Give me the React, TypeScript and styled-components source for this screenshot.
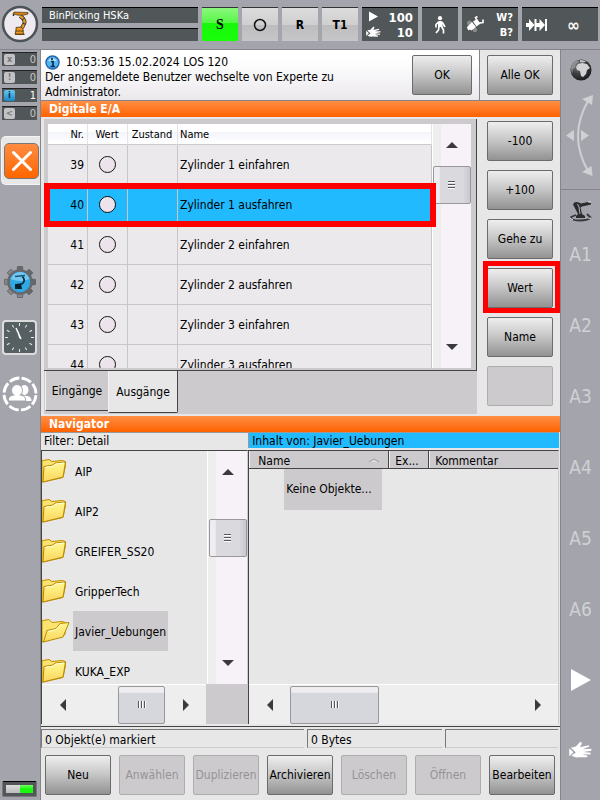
import React from "react";
import styled, { createGlobalStyle, css } from "styled-components";

const GlobalStyle = createGlobalStyle`
  *, *::before, *::after { box-sizing: border-box; }
  body { margin: 0; background: #a4a4ad; }
  body, button { font-family: "DejaVu Sans Condensed", "DejaVu Sans", sans-serif; font-size: 12px; color: #000; }
  button { margin: 0; padding: 0; border: 0; background: none; cursor: pointer; }
  svg { display: block; flex: none; }
  ul { list-style: none; margin: 0; padding: 0; }
`;

const line = "#84848a";
const panel = "#e7e7e7";
const inset = "#cdcacd";
const slate = "#515758";
const blue = "#21baff";

const Shell = styled.div`
  display: flex;
  flex-direction: column;
  min-height: 100vh;
`;

/* ---------- status bar ---------- */
const StatusBar = styled.header`
  display: flex;
  gap: 4px;
  height: 50px;
  padding: 7px 2px 8px;
  border-bottom: 1px solid ${line};
`;
const MenuButton = styled.button`
  width: 36px;
  display: flex;
  align-items: center;
  justify-content: center;
`;
const Names = styled.div`
  flex: 1;
  display: grid;
  grid-template-rows: 1fr 1fr;
  gap: 5px;
`;
const NameLine = styled.div`
  background: ${slate};
  border-top: 1px solid #000;
  color: #fff;
  font-size: 11px;
  line-height: 15px;
  padding-left: 7px;
`;
const LightKey = styled.button<{ $on?: boolean }>`
  width: 36px;
  border-top: 1px solid #333;
  display: flex;
  align-items: center;
  justify-content: center;
  font-weight: bold;
  background: ${(p) =>
    p.$on
      ? "linear-gradient(#8cf77e 0%, #55f745 45%, #18f70c 46%, #18ff08 100%)"
      : "linear-gradient(#dcdcdc 0%, #cfcfcf 50%, #bdbdbf 51%, #c6c6c8 100%)"};
`;
const SubmitKey = styled(LightKey)`
  font-family: "Liberation Serif", serif;
  font-size: 14px;
`;
const DarkKey = styled.button<{ $w: number }>`
  width: ${(p) => p.$w}px;
  background: ${slate};
  border-top: 1px solid #000;
  color: #fff;
  font-weight: bold;
  display: flex;
  align-items: center;
  justify-content: ${(p) => (p.$w > 40 ? "space-between" : "center")};
  padding: ${(p) => (p.$w > 40 ? "0 5px 0 4px" : 0)};
`;
const Endless = styled.span`
  font-size: 17px;
  padding-right: 13px;
`;
const KeyLines = styled.span<{ $small?: boolean }>`
  display: flex;
  flex-direction: column;
  text-align: right;
  line-height: 15px;
  font-size: ${(p) => (p.$small ? 11 : 13)}px;
`;

/* ---------- frame ---------- */
const Body = styled.div`
  flex: 1;
  display: grid;
  grid-template-columns: 40px minmax(0, 1fr) 40px;
`;
const Side = styled.aside`
  display: flex;
  flex-direction: column;
  align-items: center;
`;
const LeftSide = styled(Side)`
  padding: 2px 3px 3px 2px;
`;
const RightSide = styled(Side)`
  border-left: 1px solid ${line};
`;
const Main = styled.main`
  display: flex;
  flex-direction: column;
  background: ${panel};
  border-left: 1px solid ${line};
`;

/* ---------- left side ---------- */
const Counters = styled.div`
  width: 100%;
  display: flex;
  flex-direction: column;
  gap: 4px;
`;
const Counter = styled.div<{ $on?: boolean }>`
  height: 14px;
  background: ${slate};
  border-top: 1px solid #222;
  display: flex;
  align-items: center;
  justify-content: space-between;
  padding: 0 1px 0 2px;
  font-size: 11px;
  color: ${(p) => (p.$on ? "#fff" : "#c6c6ca")};
`;
const CounterIcon = styled.span<{ $on?: boolean }>`
  width: 11px;
  height: 11px;
  border-radius: 2px;
  display: grid;
  place-items: center;
  font-size: 9px;
  line-height: 11px;
  font-weight: bold;
  color: ${(p) => (p.$on ? "#06304a" : "#77777a")};
  background: ${(p) => (p.$on ? "linear-gradient(#6cc7f2, #1787c6)" : "#c2c2c4")};
`;
const CloseTab = styled.div`
  align-self: stretch;
  height: 49px;
  margin: 16px -4px 0 -1px;
  padding: 6px 0 0 2px;
  background: ${panel};
  border: 1px solid #f4f4f4;
  border-right: 0;
  border-radius: 5px 0 0 5px;
`;
const CloseButton = styled.button`
  width: 35px;
  height: 36px;
  border: 1px solid #777;
  border-radius: 5px;
  background: linear-gradient(#ff8c42, #ff6600);
  display: grid;
  place-items: center;
`;
const SideTools = styled.div`
  display: flex;
  flex-direction: column;
  align-items: center;
  gap: 21px;
  margin-top: 80px;
`;
const Battery = styled.div`
  width: 100%;
  height: 16px;
  margin-top: auto;
  padding: 3px;
  background: ${slate};
  border: 1px solid #777;
  border-top-color: #000;
  border-radius: 2px;
  display: grid;
  grid-template-columns: 1fr 1fr;
`;
const Cell = styled.span<{ $full?: boolean }>`
  background: ${(p) => (p.$full ? "linear-gradient(#77fb66, #18f70c 50%)" : "linear-gradient(#dedede, #bbb)")};
`;

/* ---------- right side ---------- */
const JogTop = styled.div`
  width: 100%;
  height: 140px;
  padding: 9px 0 0;
  border-bottom: 1px solid ${line};
  display: flex;
  flex-direction: column;
  align-items: center;
  gap: 12px;
`;
const JogRobot = styled.div`
  height: 28px;
  padding-top: 11px;
`;
const AxisButton = styled.button`
  width: 100%;
  height: 71px;
  display: grid;
  place-items: center;
  font-size: 19px;
  color: #d0d0d4;
`;

/* ---------- messages ---------- */
const Messages = styled.section`
  display: grid;
  grid-template-columns: minmax(0, 1fr) 80px;
  height: 51px;
  border-bottom: 1px solid ${line};
`;
const MessageArea = styled.div`
  display: flex;
  justify-content: space-between;
  padding: 5px 7px 0 4px;
  background: linear-gradient(#fff 20%, #ebe8ec);
  border-right: 1px solid ${line};
`;
const MessageText = styled.div`
  width: 310px;
  line-height: 15px;
`;
const MessageHead = styled.div`
  display: flex;
  align-items: center;
  gap: 6px;
  height: 15px;
`;
const AllArea = styled.div`
  padding: 5px 0 0 7px;
`;
const Key = styled.button<{ $w?: number }>`
  flex: none;
  width: ${(p) => p.$w ?? 66}px;
  height: 40px;
  border: 1px solid #6b6b6b;
  border-radius: 2px;
  background: linear-gradient(#eeeeef 0%, #c9c9ca 45%, #929292 100%);
  white-space: nowrap;
  &:disabled {
    background: ${inset};
    border-color: #adadad;
    color: #949496;
  }
`;

const TitleBar = styled.h2`
  margin: 0;
  height: 16px;
  padding-left: 8px;
  background: linear-gradient(#ff8f45, #ff6200);
  color: #fff;
  font-size: 12px;
  line-height: 17px;
  font-weight: bold;
`;

/* ---------- digital I/O ---------- */
const IoSection = styled.section`
  display: grid;
  grid-template-columns: minmax(0, 1fr) 66px;
  gap: 10px;
  padding: 2px 7px 2px 3px;
  height: 299px;
`;
const IoPanel = styled.div`
  display: flex;
  flex-direction: column;
  background: ${inset};
`;
const TableFrame = styled.div`
  height: 252px;
  padding: 5px 5px 2px 4px;
  border-right: 1px solid #444;
  border-bottom: 1px solid #444;
  display: grid;
  grid-template-columns: minmax(0, 1fr) 39px;
`;
const TableView = styled.div`
  position: relative;
  z-index: 1;
  height: 244px;
  clip-path: inset(0 -10px 0 -10px);
  background: #ebe9ec;
`;
const IoTable = styled.table`
  width: 100%;
  border-collapse: separate;
  border-spacing: 0;
  table-layout: fixed;
`;
const Th = styled.th<{ $align?: string }>`
  height: 21px;
  padding: 0 3px 0 2px;
  font-weight: normal;
  font-size: 11px;
  text-align: ${(p) => p.$align ?? "left"};
  background: linear-gradient(#fff 40%, #f4f5fb 41%, #fff);
  border-bottom: 1px solid ${inset};
  border-right: 1px solid #e6e4e8;
`;
const IoRow = styled.tr<{ $selected?: boolean }>`
  background: ${(p) => (p.$selected ? blue : "transparent")};
`;
const Td = styled.td<{ $right?: boolean }>`
  height: 40px;
  padding: 0 3px 0 2px;
  text-align: ${(p) => (p.$right ? "right" : "left")};
  border-bottom: 1px solid #c8c6c9;
  border-right: 1px solid #c8c6c9;
  white-space: nowrap;
`;
const Lamp = styled.span`
  display: block;
  width: 17px;
  height: 17px;
  margin-left: 9px;
  border: 1px solid #111;
  border-radius: 50%;
  background: radial-gradient(circle at 60% 60%, #ece3ec 55%, #fff);
`;
const RowMark = styled.div`
  position: absolute;
  left: -4px;
  right: -4px;
  top: 59px;
  height: 44px;
  border: 6px solid #f00;
`;
const Marked = styled.div`
  position: relative;
  height: 40px;
  &::after {
    content: "";
    position: absolute;
    inset: -7px -7px -5px -4px;
    border: 5px solid #f00;
    pointer-events: none;
  }
`;
const Tabs = styled.div`
  display: flex;
  padding-left: 1px;
`;
const Tab = styled.button<{ $active?: boolean }>`
  height: ${(p) => (p.$active ? 42 : 40)}px;
  width: ${(p) => (p.$active ? 70 : 63)}px;
  border-left: 1px solid #f2f2f2;
  border-bottom: 1px solid #444;
  ${(p) =>
    p.$active &&
    css`
      background: ${panel};
      border-right: 1px solid #444;
      border-radius: 0 0 2px 2px;
    `}
`;
const Softkeys = styled.div`
  display: flex;
  flex-direction: column;
  gap: 9px;
  padding-top: 2px;
`;

/* ---------- scroll bars ---------- */
const VBar = styled.div`
  background: linear-gradient(90deg, #eee 20%, #f6f2f7 21%);
  border-left: 1px solid #fff;
  display: flex;
  flex-direction: column;
  align-items: center;
`;
const HBar = styled.div`
  height: 40px;
  background: #eee;
  border-top: 1px solid #fff;
  display: flex;
  align-items: center;
`;
const Arrow = styled.button`
  width: 41px;
  height: 42px;
  display: grid;
  place-items: center;
`;
const Thumb = styled.div<{ $w: number }>`
  width: ${(p) => p.$w}px;
  height: 38px;
  border: 1px solid #97979c;
  border-radius: 2px;
  background: linear-gradient(#efedf0 15%, #d6d6dd 16%);
  display: grid;
  place-items: center;
`;
const VThumb = styled(Thumb)`
  background: linear-gradient(90deg, #efedf0 15%, #dad9de 16%, #dad9de 80%, #c8c8d2);
`;
const Spring = styled.span<{ $grow?: number }>`
  flex: ${(p) => p.$grow ?? 1};
`;

/* ---------- navigator ---------- */
const Navigator = styled.section`
  flex: 1;
  display: flex;
  flex-direction: column;
`;
const Panes = styled.div`
  flex: 1;
  display: grid;
  grid-template-columns: 2fr 3fr;
  grid-template-rows: 18px minmax(0, 1fr);
  padding-right: 1px;
`;
const Caption = styled.div<{ $active?: boolean }>`
  height: 16px;
  padding-left: 3px;
  line-height: 16px;
  border-top: 1px solid #999;
  background: ${(p) => (p.$active ? blue : panel)};
  border-left: ${(p) => (p.$active ? 1 : 0)}px solid #999;
`;
const Pane = styled.div`
  display: flex;
  flex-direction: column;
  border-top: 1px solid #444;
  border-left: 1px solid #444;
  border-right: 1px solid ${inset};
`;
const TreeGrid = styled.div`
  flex: 1;
  display: grid;
  grid-template-columns: minmax(0, 1fr) 40px;
`;
const Tree = styled.ul`
  height: 233px;
  overflow: hidden;
`;
const Node = styled.li`
  height: 40px;
  display: flex;
  align-items: center;
  gap: 3px;
`;
const NodeName = styled.button<{ $selected?: boolean }>`
  height: 40px;
  padding: 1px 2px 0;
  white-space: nowrap;
  background: ${(p) => (p.$selected ? inset : "none")};
`;
const Corner = styled.div`
  background: ${inset};
`;
const TreeFoot = styled.div`
  display: grid;
  grid-template-columns: minmax(0, 1fr) 41px;
`;
const ListHead = styled.div`
  display: grid;
  grid-template-columns: 140px 40px 1fr;
  height: 18px;
  background: ${inset};
  border-bottom: 1px solid #444;
`;
const HeadCell = styled.div`
  display: flex;
  align-items: center;
  justify-content: space-between;
  padding: 2px 9px 0 8px;
  border-left: 1px solid #f2f2f2;
  & + & { box-shadow: -1px 0 #444; padding-left: 5px; }
`;
const ListBody = styled.div`
  flex: 1;
  padding-left: 35px;
`;
const EmptyEntry = styled.div`
  width: 98px;
  height: 41px;
  line-height: 41px;
  padding-left: 2px;
  background: ${inset};
  white-space: nowrap;
`;
const StatusRow = styled.footer`
  display: grid;
  grid-template-columns: 263px 135px 1fr;
  gap: 3px;
  margin-top: 2px;
  padding-top: 2px;
  padding-right: 2px;
  border-top: 1px solid #444;
`;
const StatusCell = styled.div`
  height: 19px;
  line-height: 20px;
  padding-left: 3px;
  border-left: 1px solid #777;
  border-top: 1px solid #777;
  border-bottom: 1px solid ${inset};
`;
const Commands = styled.div`
  display: flex;
  justify-content: space-between;
  padding: 7px 5px 5px 4px;
`;

/* ---------- drawings ---------- */
const RobotLogo = () => (
  <svg width="38" height="38" viewBox="0 0 38 38">
    <circle cx="19" cy="19" r="17" fill="#eeeaf0" stroke="#4c5355" strokeWidth="2.5" />
    <path d="M12 8.500l1-1.500 14 .5v1.500l-6 1.500-5-.500z" fill="#d9820c" stroke="#3d3424" strokeWidth=".7" />
    <path d="M19 11q5 3 4.500 7l-2.500 5" fill="none" stroke="#333" strokeWidth="3.800" />
    <path d="M19 11q5 3 4.500 7l-2.500 5" fill="none" stroke="#ee9b20" strokeWidth="2.200" strokeDasharray="4 1" />
    <path d="M15 22.500l5-.5 2 2v3l1 2H14l1-3z" fill="#ef9820" stroke="#493710" strokeWidth=".8" />
    <path d="M14 26h9M14 29.500h9.500" stroke="#624413" />
    <path d="M12.500 9v2" stroke="#333" strokeWidth="1.500" />
  </svg>
);
const Hand = ({ s = 18 }: { s?: number }) => (
  <svg width={s} height={s * 0.8} viewBox="0 0 22 18" fill="#fff">
    <path d="M0 7l4 4-4 4z" />
    <path d="M1.500 6.500l5-1 4-4.500 1.800.3-.3 2L10.500 6l8.500-1.800.7 1.300-6.700 2.500 8.500-.3.200 1.800-8.200 1.200 7.500.8-.2 1.600-8-.2 5.200 1.600-.6 1.500-8.400-.2q-3 1-7-1.500l4.500-3z" />
  </svg>
);
const Play = ({ w, h }: { w: number; h: number }) => (
  <svg width={w} height={h} viewBox="0 0 20 22"><path d="M0 0l20 11L0 22z" fill="#fff" /></svg>
);
const SpeedIcons = styled.span`
  display: flex;
  flex-direction: column;
  align-items: center;
  gap: 4px;
`;
const Walker = () => (
  <svg width="12" height="18" viewBox="0 0 12 18">
    <circle cx="6" cy="2.200" r="2.100" fill="#fff" />
    <path d="M4.500 5h3l1 2v4h-4.500V7z" fill="#fff" />
    <path d="M4.500 6L2 8.500v3M8 6l1.500 2.500L11 11M5 10.500L4.500 14l-2.500 3M7.500 10.500L9.500 14v3.500" stroke="#fff" strokeWidth="1.700" fill="none" />
  </svg>
);
const Tool = () => (
  <svg width="18" height="17" viewBox="0 0 18 17">
    <circle cx="3.500" cy="7" r="2.500" fill="#888d8f" /><circle cx="9" cy="14" r="2.200" fill="#888d8f" />
    <path d="M1 11l5-5 4 5-4.500 3.500-1.500-1-1.500 1L1.500 13z" fill="#fff" />
    <path d="M7 5.500L11 3l3.500 4.500-4 3z" fill="#fff" />
    <path d="M11 4.500L9.500 1.500l2-1M13.500 7l3.500-.5V3.500" stroke="#fff" strokeWidth="1.600" fill="none" />
  </svg>
);
const StepIcon = () => (
  <svg width="22" height="14" viewBox="0 0 22 14" fill="#fff">
    <path d="M0 5h3V1l5.500 6L3 13V9H0zM8.500 1h2v12h-2zM10.500 5h3V1l5.500 6-5.500 6V9h-3zM19 1h2v12h-2z" />
  </svg>
);
const Info = () => (
  <svg width="15" height="15" viewBox="0 0 15 15">
    <circle cx="7.500" cy="7.500" r="6.500" fill="#56b6f0" stroke="#2767ae" strokeWidth="1.500" />
    <path d="M3 6q4-6 9 0z" fill="#bce3fb" />
    <path d="M6 6.500h2v4.500M5.500 11.500h4.500M7 3v2" stroke="#072b50" strokeWidth="1.700" fill="none" />
  </svg>
);
const Cross = () => (
  <svg width="20" height="20" viewBox="0 0 20 20"><path d="M1.500 1.500l17 17M18.500 1.500l-17 17" stroke="#fff" strokeWidth="3" strokeLinecap="round" /></svg>
);
const Gear = () => (
  <svg width="34" height="34" viewBox="0 0 34 34">
    {Array.from({ length: 8 }, (_, i) => (
      <path key={i} d="M14 6l.5-4.500h5L20 6z" fill={i > 3 ? "#85878a" : "#66686b"} stroke="#4e5053" strokeWidth=".6" transform={`rotate(${i * 45} 17 17)`} />
    ))}
    <circle cx="17" cy="17" r="11.500" fill="#2fa9e4" stroke="#66686b" strokeWidth="2.500" />
    <path d="M7.500 14q3-7 10-7 6 0 9 7-9 4-19 0z" fill="#74c8f0" />
    <path d="M12 11.500l10-1" stroke="#1a557c" strokeWidth="1.500" />
    <path d="M19.500 11.500q3.500 4 0 7l-3 1" stroke="#0a2c40" strokeWidth="1.800" fill="none" />
    <path d="M12 19l6-.5 1 5.500h-7z" fill="#05202e" />
  </svg>
);
const Clock = () => (
  <svg width="35" height="35" viewBox="0 0 35 35">
    <rect x="1" y="1" width="33" height="33" rx="3" fill="#566063" stroke="#dcdcde" strokeWidth="2" />
    {Array.from({ length: 12 }, (_, i) => (
      <path key={i} d="M17.500 3v3" stroke="#e8e8e8" transform={`rotate(${i * 30} 17.500 17.500)`} />
    ))}
    <path d="M19 19L14 8M18 18l-2-6" stroke="#fff" strokeWidth="1.500" />
  </svg>
);
const Users = () => (
  <svg width="36" height="36" viewBox="0 0 36 36">
    <circle cx="18" cy="18" r="16" fill="none" stroke="#fff" strokeWidth="2.800" strokeDasharray="10.200 2.360" strokeDashoffset="-1.200" />
    <ellipse cx="22.500" cy="14" rx="4" ry="5" fill="#fff" />
    <path d="M20 24v-4q10-1 9.500 5h-9.500z" fill="#fff" />
    <ellipse cx="15" cy="14.500" rx="5.500" ry="6" fill="#fff" stroke="#a4a4ad" />
    <path d="M6.500 25q-1-5 5-6h7q6 1 5 6z" fill="#fff" stroke="#a4a4ad" />
    <path d="M12.500 17h5v4h-5z" fill="#fff" />
  </svg>
);
const Globe = () => (
  <svg width="22" height="22" viewBox="0 0 22 22">
    <defs>
      <radialGradient id="globe" cx=".35" cy=".3" r=".8"><stop stopColor="#77797b" /><stop offset=".5" stopColor="#3a3c3e" /><stop offset="1" stopColor="#151617" /></radialGradient>
    </defs>
    <circle cx="11" cy="11" r="10.500" fill="url(#globe)" />
    <path d="M1 8Q3 2 8 1l1 2-3 2-1 4-2 1-1 5z" fill="#8b8d8f" />
    <path d="M8 5l4-1 5 1 3 4-3 2-1 4-3 3-2-1-1-5-3-1-1-3z" fill="#d2d2d4" />
    <path d="M10 1l6 1-2 1.500-4-.5z" fill="#c9c9cb" />
  </svg>
);
const JogArc = () => (
  <svg width="36" height="86" viewBox="0 0 36 86" fill="#d0d0d4">
    <path d="M25 8Q5 43 25 78" fill="none" stroke="#d0d0d4" strokeWidth="2" />
    <path d="M19 6L30 2l-1 10zM19 79l10.500 4-1-10zM11 37v11l-8-5.500zM18 37v11l8-5.500z" />
  </svg>
);
const RobotSmall = () => (
  <svg width="22" height="22" viewBox="0 0 22 22">
    <path d="M3 3.500Q4 0 9 1.500l2 1 7-1.500 3 .5v2l-2 .5-7 1.500-1.500 1L12 13l3 2v2H6v-2l2-2z" fill="#2a2c2e" />
    <path d="M6 14l-5 2q0 3.500 8 3.500 10 0 11.500-3L17 13" fill="none" stroke="#36383a" strokeWidth="1.800" />
    <path d="M7.500 3l1.500 3 1 7" fill="none" stroke="#b4b4b6" />
    <path d="M3 19l-3-2M18.500 17.500l2.500-.5M18 1l3 0" fill="none" stroke="#e6e6e8" />
  </svg>
);
const Folder = ({ open }: { open?: boolean }) => (
  <svg width="28" height="26" viewBox="0 0 28 26" strokeLinejoin="round">
    <defs>
      <linearGradient id="fold" x2="0" y2="1"><stop stopColor="#fff98f" /><stop offset="1" stopColor="#fbd65e" /></linearGradient>
    </defs>
    <path d={open ? "M0 2.500h1l6-1 3 3 10-1 3 1v12L1 24H0z" : "M0 2.500h1l6-1 3 2 10-1 3.500 1v4l-2.500 12L1 24H0z"} fill="#fbe36f" stroke="#c09000" />
    <path d={open ? "M1.500 24L5 12.500l9-2 4-5 9-1-6 14.500z" : "M1 24L2 8.500 11 7 13 5l10.500-1-2.500 15z"} fill="url(#fold)" stroke="#b88900" />
    <path d={open ? "M6 13.500l8-2 5-5" : "M3 9.500L11.500 8 14 6l8-1"} stroke="#fffde0" fill="none" />
  </svg>
);
const Tri = ({ d }: { d: "up" | "down" | "left" | "right" }) => {
  const paths = { up: "M0 9l6-6 6 6z", down: "M0 3h12L6 9z", left: "M9 0v12L3 6z", right: "M3 0l6 6-6 6z" };
  return <svg width="12" height="12" viewBox="0 0 12 12"><path d={paths[d]} fill="#3a3a3c" /></svg>;
};
const Grip = ({ v }: { v?: boolean }) => (
  <svg width="10" height="10" viewBox="0 0 10 10">
    <path d={v ? "M1 1.500h7M1 4.500h7M1 7.500h7" : "M1.500 1v7M4.500 1v7M7.500 1v7"} stroke="#55555a" />
    <path d={v ? "M1 2.500h7M1 5.500h7M1 8.500h7" : "M2.500 1v7M5.500 1v7M8.500 1v7"} stroke="#fff" />
  </svg>
);

const outputs = [
  [39, "Zylinder 1 einfahren"],
  [40, "Zylinder 1 ausfahren"],
  [41, "Zylinder 2 einfahren"],
  [42, "Zylinder 2 ausfahren"],
  [43, "Zylinder 3 einfahren"],
  [44, "Zylinder 3 ausfahren"],
] as const;
const folders = ["AIP", "AIP2", "GREIFER_SS20", "GripperTech", "Javier_Uebungen", "KUKA_EXP"];
const commands: [string, boolean][] = [
  ["Neu", true], ["Anwählen", false], ["Duplizieren", false], ["Archivieren", true],
  ["Löschen", false], ["Öffnen", false], ["Bearbeiten", true],
];

export default function App() {
  return (
    <Shell>
      <GlobalStyle />
      <StatusBar>
        <MenuButton aria-label="Hauptmenü"><RobotLogo /></MenuButton>
        <Names><NameLine>BinPicking HSKa</NameLine><NameLine /></Names>
        <SubmitKey $on>S</SubmitKey>
        <LightKey aria-label="Antriebe">
          <svg width="14" height="14"><circle cx="7" cy="7" r="5.500" fill="none" stroke="#111" strokeWidth="1.500" /></svg>
        </LightKey>
        <LightKey>R</LightKey>
        <LightKey>T1</LightKey>
        <DarkKey $w={56}>
          <SpeedIcons><Play w={9} h={11} /><Hand s={15} /></SpeedIcons>
          <KeyLines><span>100</span><span>10</span></KeyLines>
        </DarkKey>
        <DarkKey $w={36} aria-label="Gehen"><Walker /></DarkKey>
        <DarkKey $w={56}><Tool /><KeyLines $small><span>W?</span><span>B?</span></KeyLines></DarkKey>
        <DarkKey $w={76}><StepIcon /><Endless>∞</Endless></DarkKey>
      </StatusBar>
      <Body>
        <LeftSide>
          <Counters>
            <Counter><CounterIcon>x</CounterIcon>0</Counter>
            <Counter><CounterIcon>!</CounterIcon>0</Counter>
            <Counter $on><CounterIcon $on>i</CounterIcon>1</Counter>
            <Counter><CounterIcon>&lt;</CounterIcon>0</Counter>
          </Counters>
          <CloseTab><CloseButton aria-label="Schließen"><Cross /></CloseButton></CloseTab>
          <SideTools>
            <button aria-label="Einstellungen"><Gear /></button>
            <button aria-label="Uhr"><Clock /></button>
            <button aria-label="Benutzer"><Users /></button>
          </SideTools>
          <Battery><Cell /><Cell $full /></Battery>
        </LeftSide>
        <Main>
          <Messages>
            <MessageArea>
              <MessageText>
                <MessageHead><Info />10:53:36 15.02.2024 LOS 120</MessageHead>
                Der angemeldete Benutzer wechselte von Experte zu Administrator.
              </MessageText>
              <Key $w={60}>OK</Key>
            </MessageArea>
            <AllArea><Key>Alle OK</Key></AllArea>
          </Messages>
          <TitleBar>Digitale E/A</TitleBar>
          <IoSection>
            <IoPanel>
              <TableFrame>
                <TableView>
                  <IoTable>
                    <colgroup><col width="40" /><col width="40" /><col width="50" /><col /></colgroup>
                    <thead>
                      <tr><Th $align="right">Nr.</Th><Th $align="center">Wert</Th><Th $align="center">Zustand</Th><Th>Name</Th></tr>
                    </thead>
                    <tbody>
                      {outputs.map(([n, name]) => (
                        <IoRow key={n} $selected={n === 40}>
                          <Td $right>{n}</Td><Td><Lamp /></Td><Td /><Td>{name}</Td>
                        </IoRow>
                      ))}
                    </tbody>
                  </IoTable>
                  <RowMark />
                </TableView>
                <VBar>
                  <Arrow aria-label="Nach oben"><Tri d="up" /></Arrow>
                  <VThumb $w={38}><Grip v /></VThumb>
                  <Spring />
                  <Arrow aria-label="Nach unten"><Tri d="down" /></Arrow>
                </VBar>
              </TableFrame>
              <Tabs role="tablist">
                <Tab role="tab">Eingänge</Tab>
                <Tab role="tab" aria-selected $active>Ausgänge</Tab>
              </Tabs>
            </IoPanel>
            <Softkeys>
              <Key>-100</Key>
              <Key>+100</Key>
              <Key>Gehe zu</Key>
              <Marked><Key>Wert</Key></Marked>
              <Key>Name</Key>
              <Key disabled aria-label="Nicht belegt" />
            </Softkeys>
          </IoSection>
          <Navigator>
            <TitleBar>Navigator</TitleBar>
            <Panes>
              <Caption>Filter: Detail</Caption>
              <Caption $active>Inhalt von: Javier_Uebungen</Caption>
              <Pane>
                <TreeGrid>
                  <Tree>
                    {folders.map((f) => (
                      <Node key={f}>
                        <Folder open={f === "Javier_Uebungen"} />
                        <NodeName $selected={f === "Javier_Uebungen"}>{f}</NodeName>
                      </Node>
                    ))}
                  </Tree>
                  <VBar>
                    <Arrow aria-label="Nach oben"><Tri d="up" /></Arrow>
                    <Spring $grow={3} />
                    <VThumb $w={38}><Grip v /></VThumb>
                    <Spring $grow={10} />
                    <Arrow aria-label="Nach unten"><Tri d="down" /></Arrow>
                  </VBar>
                </TreeGrid>
                <TreeFoot>
                  <HBar>
                    <Arrow aria-label="Nach links"><Tri d="left" /></Arrow>
                    <Spring />
                    <Thumb $w={47}><Grip /></Thumb>
                    <Arrow aria-label="Nach rechts"><Tri d="right" /></Arrow>
                  </HBar>
                  <Corner />
                </TreeFoot>
              </Pane>
              <Pane>
                <ListHead>
                  <HeadCell>Name
                    <svg width="12" height="5"><path d="M1 4L6 1l5 3" fill="#ddd" stroke="#999" /></svg>
                  </HeadCell>
                  <HeadCell>Ex...</HeadCell>
                  <HeadCell>Kommentar</HeadCell>
                </ListHead>
                <ListBody><EmptyEntry>Keine Objekte...</EmptyEntry></ListBody>
                <HBar>
                  <Arrow aria-label="Nach links"><Tri d="left" /></Arrow>
                  <Thumb $w={89}><Grip /></Thumb>
                  <Spring />
                  <Arrow aria-label="Nach rechts"><Tri d="right" /></Arrow>
                </HBar>
              </Pane>
            </Panes>
            <StatusRow>
              <StatusCell>0 Objekt(e) markiert</StatusCell>
              <StatusCell>0 Bytes</StatusCell>
              <StatusCell />
            </StatusRow>
            <Commands>
              {commands.map(([label, on]) => <Key key={label} disabled={!on}>{label}</Key>)}
            </Commands>
          </Navigator>
        </Main>
        <RightSide>
          <JogTop><Globe /><JogArc /></JogTop>
          <JogRobot><RobotSmall /></JogRobot>
          {["A1", "A2", "A3", "A4", "A5", "A6"].map((a) => <AxisButton key={a}>{a}</AxisButton>)}
          <AxisButton aria-label="Start"><Play w={20} h={22} /></AxisButton>
          <AxisButton aria-label="Hand"><Hand s={23} /></AxisButton>
        </RightSide>
      </Body>
    </Shell>
  );
}
